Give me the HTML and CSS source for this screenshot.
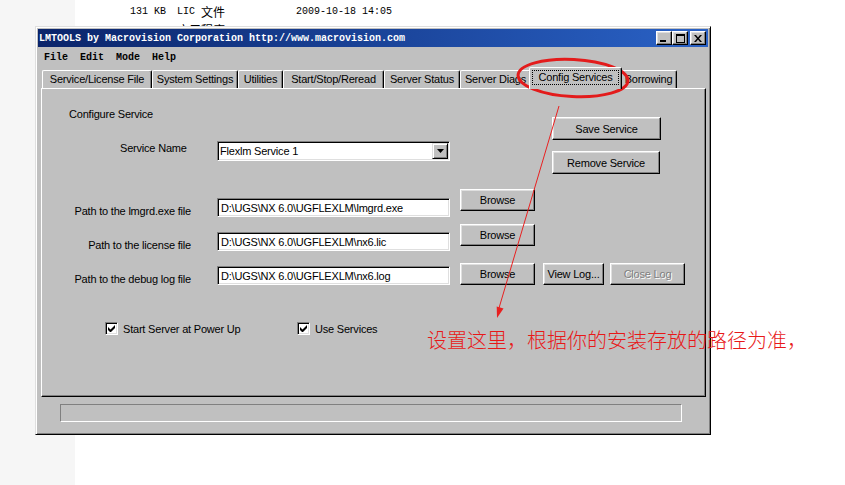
FILE: index.html
```html
<!DOCTYPE html>
<html lang="zh-CN">
<head>
    <meta charset="UTF-8">
    <meta name="viewport" content="width=device-width, initial-scale=1.0">
    <title>LMTOOLS</title>
    <link rel="stylesheet" href="styles.css">
</head>
<body>
    <!-- Explorer file list behind the window -->
    <div class="listing">
        <div class="file-row">
            <span class="size">131 KB</span>
            <span class="type">LIC <span class="cjk">文件</span></span>
            <span class="date">2009-10-18 14:05</span>
        </div>
        <div class="file-row partial">
            <span class="size"></span>
            <span class="type"><span class="cjk">应用程序</span></span>
        </div>
    </div>

    <div class="window">
        <div class="titlebar">
            <span class="title">LMTOOLS by Macrovision Corporation http://www.macrovision.com</span>
            <div class="caption-buttons">
                <div class="cap-btn">
                    <svg width="8" height="8" viewBox="0 0 8 8"><rect x="0" y="6" width="6" height="2" fill="#000"/></svg>
                </div>
                <div class="cap-btn">
                    <svg width="9" height="9" viewBox="0 0 9 9"><rect x="0.5" y="0.5" width="8" height="8" fill="none" stroke="#000"/><rect x="0" y="0" width="9" height="2" fill="#000"/></svg>
                </div>
                <div class="cap-btn close">
                    <svg width="8" height="7" viewBox="0 0 8 7"><path d="M0 0h2l2 2.5 2-2.5h2l-3 3.5 3 3.5h-2l-2-2.5-2 2.5h-2l3-3.5z" fill="#000"/></svg>
                </div>
            </div>
        </div>

        <div class="menubar"><span>File</span><span>Edit</span><span>Mode</span><span>Help</span></div>

        <div class="client">
            <div class="tabs">
                <div class="tab">Service/License File</div>
                <div class="tab">System Settings</div>
                <div class="tab">Utilities</div>
                <div class="tab">Start/Stop/Reread</div>
                <div class="tab">Server Status</div>
                <div class="tab">Server Diags</div>
                <div class="tab selected"><span class="focus">Config Services</span></div>
                <div class="tab">Borrowing</div>
            </div>

            <div class="panel">
                <div class="section-top">
                    <div class="service-col">
                        <div class="heading">Configure Service</div>
                        <div class="service-row">
                            <span class="service-label">Service Name</span>
                            <div class="combo">
                                <span class="combo-text">Flexlm Service 1</span>
                                <span class="combo-btn">
                                    <svg width="7" height="4" viewBox="0 0 7 4"><path d="M0 0h7L3.5 4z" fill="#000"/></svg>
                                </span>
                            </div>
                        </div>
                    </div>
                    <div class="service-buttons">
                        <div class="btn save">Save Service</div>
                        <div class="btn remove">Remove Service</div>
                    </div>
                </div>

                <div class="path-row row-exe">
                    <div class="field-group">
                        <span class="path-label">Path to the lmgrd.exe file</span>
                        <div class="path-input">D:\UGS\NX 6.0\UGFLEXLM\lmgrd.exe</div>
                    </div>
                    <div class="btn browse">Browse</div>
                </div>

                <div class="path-row row-lic">
                    <div class="field-group">
                        <span class="path-label">Path to the license file</span>
                        <div class="path-input">D:\UGS\NX 6.0\UGFLEXLM\nx6.lic</div>
                    </div>
                    <div class="btn browse">Browse</div>
                </div>

                <div class="path-row row-log">
                    <div class="field-group">
                        <span class="path-label">Path to the debug log file</span>
                        <div class="path-input">D:\UGS\NX 6.0\UGFLEXLM\nx6.log</div>
                    </div>
                    <div class="btn browse">Browse</div>
                    <div class="btn view-log">View Log...</div>
                    <div class="btn close-log disabled">Close Log</div>
                </div>

                <div class="check-row">
                    <div class="check-item first">
                        <span class="checkbox">
                            <svg width="7" height="7" viewBox="0 0 7 7"><path d="M0 2v3l2 2h1l4-4V0L2.5 4.5z" fill="#000"/></svg>
                        </span>
                        <span>Start Server at Power Up</span>
                    </div>
                    <div class="check-item">
                        <span class="checkbox">
                            <svg width="7" height="7" viewBox="0 0 7 7"><path d="M0 2v3l2 2h1l4-4V0L2.5 4.5z" fill="#000"/></svg>
                        </span>
                        <span>Use Services</span>
                    </div>
                </div>
            </div>

            <div class="statusbar"></div>
        </div>
    </div>

    <!-- Red hand-drawn annotation over the screenshot -->
    <svg class="annotation" width="845" height="485" viewBox="0 0 845 485">
        <ellipse cx="573" cy="78" rx="55" ry="18.5" fill="none" stroke="#e31b1b" stroke-width="3" transform="rotate(3 573 78)"/>
        <line x1="559" y1="106" x2="499" y2="308" stroke="#e82020" stroke-width="1"/>
        <polygon points="497,318 503.5,308.4 496.7,306.4" fill="#e82020"/>
    </svg>
    <div class="note">设置这里，根据你的安装存放的路径为准，</div>
</body>
</html>
```

FILE: styles.css
```css
html, body {
    margin: 0;
    height: 485px;
}

body {
    position: relative;
    overflow: hidden;
    background: linear-gradient(to right, #f6f6f6 75px, #ffffff 75px);
    font-family: "Liberation Sans", Arial, sans-serif;
    font-size: 11px;
    color: #000;
}

/* File list behind */
.listing {
    height: 22px;
    padding-top: 4px;
    overflow: hidden;
    font-family: "Liberation Mono", "Noto Sans CJK SC", monospace;
    font-size: 10px;
}

.file-row {
    display: flex;
    align-items: center;
    height: 16px;
    line-height: 16px;
    white-space: pre;
}

.file-row.partial {
    height: 6px;
    overflow: hidden;
    align-items: flex-start;
}

.size {
    width: 47px;
    margin-left: 130px;
}

.type {
    display: flex;
    align-items: center;
    width: 119px;
}

.cjk {
    font-family: "Noto Sans CJK SC", sans-serif;
    font-size: 12px;
    line-height: 16px;
}

.partial .cjk {
    margin-top: 2px;
}

/* Window frame */
.window {
    box-sizing: border-box;
    width: 676px;
    height: 409px;
    margin-left: 35px;
    padding: 2px;
    background: #c0c0c0;
    border: 1px solid;
    border-color: #dfdfdf #000 #000 #dfdfdf;
    box-shadow: inset 1px 1px #fff, inset -1px -1px #808080;
}

.titlebar {
    display: flex;
    align-items: center;
    justify-content: space-between;
    height: 18px;
    padding-left: 1px;
    background: linear-gradient(to right, #0a246a, #2a62c6);
    color: #fff;
}

.title {
    font-family: "Liberation Mono", monospace;
    font-weight: bold;
    font-size: 10px;
    white-space: pre;
}

.caption-buttons {
    display: flex;
    margin-right: 2px;
}

.cap-btn {
    box-sizing: border-box;
    width: 16px;
    height: 14px;
    display: flex;
    justify-content: center;
    align-items: center;
    background: #c0c0c0;
    border: 1px solid;
    border-color: #fff #000 #000 #fff;
    box-shadow: inset -1px -1px #808080, inset 1px 1px #dfdfdf;
}

.cap-btn.close {
    margin-left: 2px;
}

.menubar {
    display: flex;
    align-items: center;
    height: 20px;
    padding-left: 6px;
    font-family: "Liberation Mono", monospace;
    font-size: 10px;
    font-weight: bold;
}

.menubar span {
    width: 36px;
}

/* Tabs */
.client {
    padding: 0 2px 0 3px;
    letter-spacing: -0.2px;
}

.tabs {
    display: flex;
    align-items: flex-end;
    height: 21px;
    padding-left: 1px;
}

.tab {
    box-sizing: border-box;
    height: 18px;
    line-height: 17px;
    text-align: center;
    white-space: nowrap;
    border: 1px solid;
    border-bottom: none;
    border-color: #fff #000 transparent #fff;
    border-radius: 2px 2px 0 0;
    box-shadow: inset -1px 0 #808080;
}

.tab:nth-child(1) { width: 110px; }
.tab:nth-child(2) { width: 86px; }
.tab:nth-child(3) { width: 45px; }
.tab:nth-child(4) { width: 101px; }
.tab:nth-child(5) { width: 76px; }
.tab:nth-child(6) { width: 71px; }
.tab:nth-child(8) { width: 57px; }

.tab.selected {
    position: relative;
    z-index: 1;
    width: 93px;
    height: 22px;
    margin: 0 -2px -1px;
    background: #c0c0c0;
}

.focus {
    display: block;
    height: 13px;
    margin: 3px 3px 0;
    line-height: 12px;
    outline: 1px dotted #000;
}

/* Tab page */
.panel {
    box-sizing: border-box;
    height: 309px;
    border: 1px solid;
    border-color: #fff #000 #000 #fff;
    box-shadow: inset -1px -1px #808080;
}

.section-top {
    display: flex;
}

.service-col {
    width: 510px;
}

.heading {
    margin: 18px 0 0 27px;
    line-height: 14px;
}

.service-row {
    display: flex;
    align-items: flex-start;
    margin-top: 20px;
}

.service-label {
    width: 97px;
    margin-left: 78px;
    line-height: 14px;
}

.combo {
    box-sizing: border-box;
    display: flex;
    align-items: center;
    justify-content: space-between;
    width: 233px;
    height: 20px;
    background: #fff;
    border: 1px solid;
    border-color: #808080 #fff #fff #808080;
    box-shadow: inset 1px 1px #000, inset -1px -1px #dfdfdf;
    padding: 2px;
}

.combo-text {
    line-height: 14px;
}

.combo-btn {
    box-sizing: border-box;
    display: flex;
    justify-content: center;
    align-items: center;
    width: 16px;
    height: 16px;
    margin-right: -1px;
    background: #c0c0c0;
    border: 1px solid;
    border-color: #dfdfdf #000 #000 #dfdfdf;
    box-shadow: inset 1px 1px #fff, inset -1px -1px #808080;
}

.service-buttons {
    display: flex;
    flex-direction: column;
}

/* Push buttons */
.btn {
    box-sizing: border-box;
    display: flex;
    justify-content: center;
    align-items: center;
    height: 22px;
    background: #c0c0c0;
    border: 1px solid;
    border-color: #fff #000 #000 #fff;
    box-shadow: inset -1px -1px #808080, inset 1px 1px #dfdfdf;
    white-space: nowrap;
}

.btn.save {
    width: 109px;
    height: 23px;
    margin-top: 28px;
}

.btn.remove {
    width: 108px;
    height: 23px;
    margin-top: 11px;
}

.btn.browse {
    width: 75px;
    margin-left: 10px;
}

.btn.view-log {
    width: 61px;
    margin-left: 8px;
}

.btn.close-log {
    width: 75px;
    margin-left: 6px;
}

.btn.disabled {
    color: #808080;
    text-shadow: 1px 1px #fff;
}

/* Path rows */
.path-row {
    display: flex;
    align-items: flex-start;
}

.field-group {
    display: flex;
    align-items: flex-start;
}

.row-exe { margin-top: 15px; }
.row-exe .field-group { margin-top: 9px; }
.row-lic { margin-top: 6px; }
.row-lic .field-group { margin-top: 8px; }
.row-log { margin-top: 11px; }
.row-log .field-group { margin-top: 3px; }

.path-label {
    width: 149px;
    padding-top: 6px;
    line-height: 14px;
    text-align: right;
}

.path-input {
    box-sizing: border-box;
    width: 233px;
    height: 19px;
    margin-left: 26px;
    padding: 2px 3px 0;
    line-height: 15px;
    background: #fff;
    border: 1px solid;
    border-color: #808080 #fff #fff #808080;
    box-shadow: inset 1px 1px #000, inset -1px -1px #dfdfdf;
    white-space: nowrap;
}

/* Check boxes */
.check-row {
    display: flex;
    align-items: center;
    margin-top: 36px;
    padding-left: 63px;
}

.check-item {
    display: flex;
    align-items: center;
    gap: 5px;
}

.check-item.first {
    width: 192px;
}

.checkbox {
    box-sizing: border-box;
    display: flex;
    justify-content: center;
    align-items: center;
    width: 13px;
    height: 13px;
    background: #fff;
    border: 1px solid;
    border-color: #808080 #fff #fff #808080;
    box-shadow: inset 1px 1px #000, inset -1px -1px #dfdfdf;
}

.statusbar {
    height: 18px;
    margin: 7px 24px 0 19px;
    box-sizing: border-box;
    border: 1px solid;
    border-color: #808080 #fff #fff #808080;
}

/* Annotation */
.annotation {
    position: absolute;
    top: 0;
    left: 0;
    pointer-events: none;
}

.note {
    position: absolute;
    top: 330px;
    left: 427px;
    font-family: "Noto Sans CJK SC", sans-serif;
    font-size: 20px;
    font-weight: 300;
    line-height: 20px;
    color: #e81818;
    white-space: nowrap;
}
```
